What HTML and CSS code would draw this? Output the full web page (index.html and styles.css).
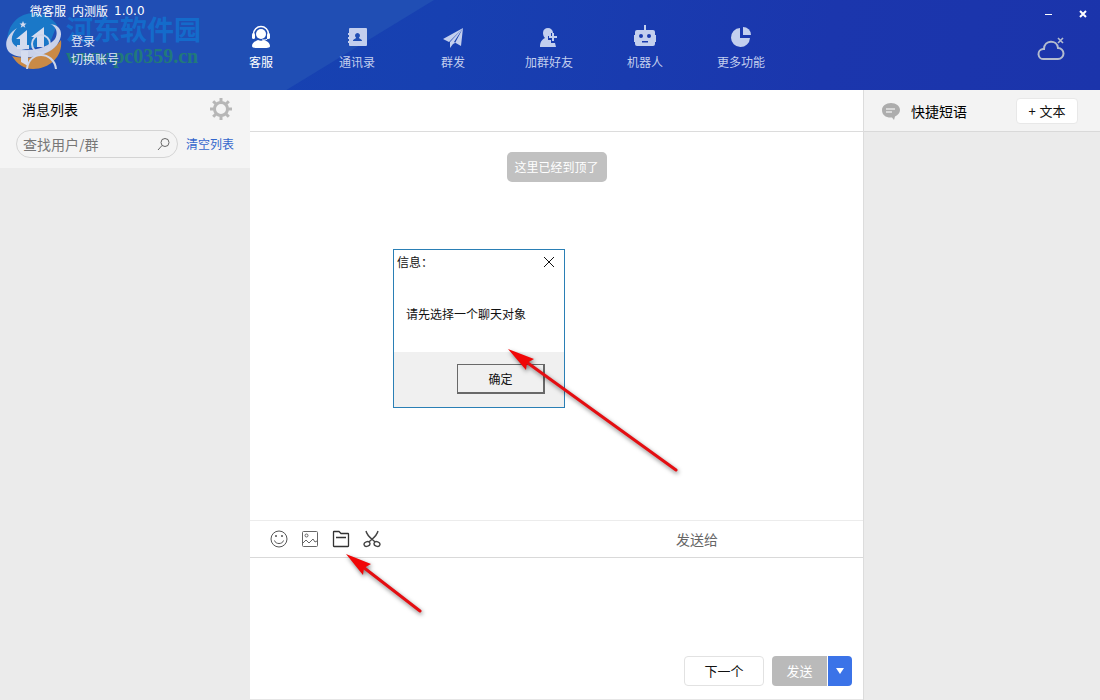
FILE: index.html
```html
<!DOCTYPE html>
<html lang="zh-CN">
<head>
  <meta charset="UTF-8">
  <meta name="viewport" content="width=device-width, initial-scale=1.0">
  <title>微客服</title>
  <link rel="stylesheet" href="styles.css">
</head>
<body>
  <!-- Header -->
  <header class="header">
    <div class="account">
      <div class="watermark">
        <svg width="58" height="58" viewBox="0 0 58 58">
          <path d="M2 32C2 13 14 2 29 2c10 0 18 5 23 12L44 34 10 40z" fill="#1a78c8"/>
          <path d="M7 45C24 50 46 44 56 29c2 17-12 29-28 29-9 0-16-5-21-13z" fill="#c98a46"/>
          <path d="M12 17C6 24 4 32 12 36c12 7 32 0 38-8 4-8 0-13-5-15 12 1 14 11 7 21C42 47 14 50 4 41-2 34 2 23 12 17z" fill="#c9d2ea"/>
          <path d="M11 28l11-9v15h2v4H12v-4h3v-6zM26 26l13-10v20h-7v-10zM16 40h7v15l-7-4z" fill="#d5dcef"/>
          <path d="M18 10l1 2.500h2.500l-2 1.700.8 2.600-2.300-1.500-2.300 1.500.8-2.600-2-1.700H17z" fill="#d5dcef"/>
        </svg>
        <div class="watermark-text">
          <span class="watermark-name">河东软件园</span>
          <span class="watermark-url">www.pc0359.cn</span>
        </div>
      </div>
      <svg class="avatar" width="34" height="38" viewBox="0 0 34 38" fill="none" stroke="#cdd6ec" stroke-width="2">
        <circle cx="15" cy="13" r="9"/>
        <path d="M1 38c1-9 7-14 14-14s14 5 15 14"/>
      </svg>
      <div class="app-title"><span>微客服</span><span>内测版</span><span class="version">1.0.0</span></div>
      <a class="account-link" href="#login">登录</a>
      <a class="account-link" href="#switch">切换账号</a>
    </div>

    <nav class="nav">
      <a class="nav-item active" href="#service">
        <svg width="24" height="24" viewBox="0 0 24 24" fill="currentColor">
          <circle cx="12" cy="9" r="5"/>
          <path d="M4.500 9a7.500 7.500 0 0 1 15 0" fill="none" stroke="currentColor" stroke-width="1.500"/>
          <rect x="3" y="8" width="3" height="6" rx="1.500"/>
          <rect x="18" y="8" width="3" height="6" rx="1.500"/>
          <path d="M19 13c-1 2-3 2-6 2" fill="none" stroke="currentColor"/>
          <path d="M3 21c0-3 3-5 6-6 2 1 4 1 6 0 3 1 6 3 6 6 0 2-3 2-9 2s-9 0-9-2z"/>
        </svg>
        <span>客服</span>
      </a>
      <a class="nav-item" href="#contacts">
        <svg width="24" height="24" viewBox="0 0 24 24" fill="currentColor">
          <path fill-rule="evenodd" d="M5 3h16q1 0 1 1v16q0 1-1 1H5q-1 0-1-1v-2H3v-2h1v-2H3v-2h1v-2H3V8h1V4q0-1 1-1zm7.500 5a2.500 2.500 0 0 0-1.500 4.500c0 1.500-3 1.500-3 3.500h9c0-2-3-2-3-3.500A2.500 2.500 0 0 0 12.500 8z"/>
        </svg>
        <span>通讯录</span>
      </a>
      <a class="nav-item" href="#broadcast">
        <svg width="24" height="24" viewBox="0 0 24 24" fill="currentColor">
          <path d="M2 14L22 3 8 17zM22 3l-2 18-7-4zM22 3L9 17v6l3-4 2-1z"/>
        </svg>
        <span>群发</span>
      </a>
      <a class="nav-item" href="#friends">
        <svg width="24" height="24" viewBox="0 0 24 24" fill="currentColor">
          <path d="M11 3a5 5 0 0 1 5 5h-2v3h-3v4h3v3h4l1 4H3c0-4 1-7 5-9-3-3-3-10 3-10z"/>
          <path d="M15 8h2v3h3v2h-3v3h-2v-3h-3v-2h3z"/>
        </svg>
        <span>加群好友</span>
      </a>
      <a class="nav-item" href="#robot">
        <svg width="24" height="24" viewBox="0 0 24 24" fill="currentColor">
          <path fill-rule="evenodd" d="M11 0h2v5h7q2 0 2 2v3h1v7h-1v2q0 2-2 2H4q-2 0-2-2v-2H1v-7h1V7q0-2 2-2h7zM8 9a2 2 0 1 0 0 4 2 2 0 0 0 0-4zm8 0a2 2 0 1 0 0 4 2 2 0 0 0 0-4zm-7 7v1.500h6V16z"/>
        </svg>
        <span>机器人</span>
      </a>
      <a class="nav-item" href="#more">
        <svg width="24" height="24" viewBox="0 0 24 24" fill="currentColor">
          <path d="M11 3a9.500 9.500 0 1 0 10 10H11z"/>
          <path d="M14 2a8 8 0 0 1 8 8h-8z"/>
        </svg>
        <span>更多功能</span>
      </a>
    </nav>

    <div class="window-tools">
      <div class="window-buttons">
        <button type="button" aria-label="最小化">
          <svg width="8" height="8" viewBox="0 0 8 8" stroke="#fff"><path d="M0 4.500h7"/></svg>
        </button>
        <button type="button" aria-label="关闭">
          <svg width="8" height="8" viewBox="0 0 8 8" stroke="#fff" stroke-width="2"><path d="M1 1l6 6M7 1L1 7"/></svg>
        </button>
      </div>
      <button type="button" class="cloud" aria-label="云端未连接">
        <svg width="28" height="24" viewBox="0 0 28 24" fill="none" stroke="#b4bccf" stroke-width="2">
          <path d="M7 22a5 5 0 0 1-1-10h1c0-9 13-10 14-1a5.500 5.500 0 0 1 0 11z"/>
          <path d="M21 1l5 5M26 1l-5 5" stroke-width="1.600"/>
        </svg>
      </button>
    </div>
  </header>

  <main class="main">
    <!-- Message list -->
    <aside class="sidebar">
      <div class="list-head">
        <div class="list-title">
          <h2>消息列表</h2>
          <button type="button" aria-label="设置">
            <svg width="24" height="24" viewBox="0 0 24 24" fill="none" stroke="#b7b7b7">
              <circle cx="12" cy="12" r="6.500" stroke-width="3"/>
              <path stroke-width="3" d="M12 1v4M12 19v4M1 12h4M19 12h4M4.200 4.200L7 7M17 17l2.800 2.800M4.200 19.800L7 17M17 7l2.800-2.800"/>
            </svg>
          </button>
        </div>
        <div class="search-row">
          <label class="search">
            <input type="text" placeholder="查找用户/群" aria-label="查找用户/群">
            <svg width="14" height="14" viewBox="0 0 14 14" fill="none" stroke="#666"><circle cx="8" cy="5.500" r="4"/><path d="M5 8.500L1 13"/></svg>
          </label>
          <a class="clear-link" href="#clear">清空列表</a>
        </div>
      </div>
    </aside>

    <!-- Chat -->
    <section class="chat">
      <div class="chat-head"></div>
      <div class="messages">
        <div class="top-tip">这里已经到顶了</div>
      </div>
      <div class="toolbar">
        <div class="tools">
          <button type="button" aria-label="表情">
            <svg width="18" height="18" viewBox="0 0 18 18" fill="none" stroke="#555"><circle cx="9" cy="9" r="8"/><path d="M4.500 10.500c1 4 8 4 9 0"/><circle cx="6" cy="6" r=".6" fill="#555"/><circle cx="12" cy="6" r=".6" fill="#555"/></svg>
          </button>
          <button type="button" aria-label="图片">
            <svg width="18" height="18" viewBox="0 0 18 18" fill="none" stroke="#666"><rect x="1.500" y="1.500" width="15" height="15" rx="1"/><circle cx="5.500" cy="5.500" r="1.500"/><path d="M2 13l3-3 3 3 4-4 2 3 2-1"/></svg>
          </button>
          <button type="button" class="file-tool" aria-label="文件">
            <svg width="18" height="18" viewBox="0 0 18 18" fill="none" stroke="#333" stroke-width="1.300"><path d="M1.500 2q0-.5.5-.5h5l2 2h7q.5 0 .5.500v12q0 .5-.5.500H2q-.5 0-.5-.5zM4 7.500h10"/></svg>
            <svg class="arrow-small" width="90" height="72" viewBox="0 0 90 72" aria-hidden="true">
              <path d="M22 17L79 61" stroke="#e40e12" stroke-width="3" stroke-linecap="round"/>
              <path d="M5 4l25 10-7 4-1 7z" fill="#f00606"/>
            </svg>
          </button>
          <button type="button" aria-label="截图">
            <svg width="18" height="18" viewBox="0 0 18 18" fill="none" stroke="#444" stroke-width="1.400"><path d="M3 1c1 5 6 8 9 11M15 1c-1 5-6 8-9 11"/><ellipse cx="4" cy="14" rx="3" ry="2.300" transform="rotate(-20 4 14)"/><ellipse cx="14" cy="14" rx="3" ry="2.300" transform="rotate(20 14 14)"/></svg>
          </button>
        </div>
        <span class="send-to">发送给</span>
      </div>
      <div class="composer">
        <textarea aria-label="消息内容"></textarea>
        <div class="actions">
          <button type="button" class="next-btn">下一个</button>
          <div class="send-group">
            <button type="button" class="send-btn">发送</button>
            <button type="button" class="send-more" aria-label="发送选项">
              <svg width="8" height="6" viewBox="0 0 8 6"><path d="M0 0h8L4 6z" fill="#fff"/></svg>
            </button>
          </div>
        </div>
      </div>
    </section>

    <!-- Quick phrases -->
    <aside class="phrases">
      <div class="phrases-head">
        <svg width="20" height="20" viewBox="0 0 20 20"><path d="M10 2c5 0 9 3 9 7 0 3-2 5-5 6.500L13 19l-2-2.500C5 17 1 14 1 9c0-4 4-7 9-7z" fill="#adadad"/><path d="M5 8h9M5 11h6" stroke="#e6e6e6" stroke-width="1.500"/></svg>
        <h2>快捷短语</h2>
        <button type="button" class="add-btn"><span>+</span><span>文本</span></button>
      </div>
    </aside>
  </main>

  <!-- Message box -->
  <div class="dialog" role="dialog" aria-labelledby="dialogTitle">
    <div class="dialog-head">
      <span id="dialogTitle">信息<span class="colon">：</span></span>
      <button type="button" aria-label="关闭">
        <svg width="12" height="12" viewBox="0 0 12 12" stroke="#111"><path d="M1 1l10 10M11 1L1 11"/></svg>
      </button>
    </div>
    <p class="dialog-text">请先选择一个聊天对象</p>
    <div class="dialog-foot">
      <button type="button" class="ok-btn">确定</button>
    </div>
    <svg class="arrow-large" width="184" height="136" viewBox="0 0 184 136" aria-hidden="true">
      <path d="M21 16L172 125" stroke="#e40e12" stroke-width="3" stroke-linecap="round"/>
      <path d="M4 4l26 10-7 4-1 7z" fill="#f00606"/>
    </svg>
  </div>
</body>
</html>
```

FILE: styles.css
```css
* {
  box-sizing: border-box;
}

body {
  font-family: "Noto Sans CJK SC", sans-serif;
  font-size: 12px;
  line-height: 16px;
  margin: 0;
  min-height: 100vh;
  display: flex;
  flex-direction: column;
  color: #111;
  background: #ebebeb;
}

button {
  font: inherit;
  color: inherit;
  border: none;
  background: none;
  padding: 0;
  cursor: pointer;
}

a {
  text-decoration: none;
}

svg {
  display: block;
}

h2 {
  font-size: 14px;
  font-weight: normal;
  line-height: 20px;
  margin: 0;
  color: #000;
}

/* Header */
.header {
  position: relative;
  display: flex;
  height: 90px;
  color: #fff;
  background: linear-gradient(100deg, #1645b3, #1740b1 40%, #1b36ad 75%, #1b34ab);
}

.header::before {
  content: '';
  position: absolute;
  top: 0;
  left: 0;
  width: 434px;
  height: 100%;
  background: #204eb4;
  clip-path: polygon(0 0, 100% 0, 66% 100%, 0 100%);
}

.account {
  position: relative;
  width: 213px;
  padding: 3px 0 0 30px;
}

.app-title {
  position: relative;
  display: flex;
  gap: 6px;
  margin-bottom: 14px;
}

.version {
  font-family: "DejaVu Sans", sans-serif;
}

.account-link {
  position: relative;
  display: block;
  width: max-content;
  margin: 0 0 2px 41px;
  color: #dde5f6;
}

.avatar {
  position: absolute;
  left: 26px;
  top: 31px;
}

.watermark {
  position: absolute;
  left: 5px;
  top: 11px;
  display: flex;
  gap: 3px;
  pointer-events: none;
}

.watermark-text {
  display: flex;
  flex-direction: column;
  padding-top: 4px;
}

.watermark-name {
  font-size: 27px;
  line-height: 28px;
  font-weight: bold;
  color: #146bcb;
}

.watermark-url {
  font-family: "Liberation Serif", serif;
  font-size: 20px;
  line-height: 26px;
  font-weight: bold;
  color: #21797a;
}

/* Navigation */
.nav {
  position: relative;
  display: flex;
}

.nav-item {
  width: 96px;
  padding-top: 25px;
  display: flex;
  flex-direction: column;
  align-items: center;
  gap: 5px;
  color: #c3cfee;
}

.nav-item.active {
  color: #fff;
}

.window-tools {
  display: flex;
  flex-direction: column;
  align-items: flex-end;
  margin-left: auto;
  padding: 10px 13px 0 0;
}

.window-buttons {
  display: flex;
  gap: 26px;
}

.cloud {
  margin: 19px 22px 0 0;
}

/* Columns */
.main {
  flex: 1;
  display: grid;
  grid-template-columns: 250px 1fr 237px;
}

.list-head {
  height: 78px;
  padding: 7px 16px 0;
  background: #f4f4f4;
}

.list-title {
  display: flex;
  justify-content: space-between;
  align-items: center;
  padding: 0 1px 0 6px;
}

.search-row {
  display: flex;
  align-items: center;
  gap: 8px;
  margin-top: 9px;
}

.search {
  width: 162px;
  height: 28px;
  padding: 0 6px;
  display: flex;
  align-items: center;
  border: 1px solid #d4d4d4;
  border-radius: 14px;
}

.search input {
  flex: 1;
  min-width: 0;
  padding: 0;
  border: none;
  outline: none;
  background: none;
  font: inherit;
  font-size: 14px;
}

.search input::placeholder {
  color: #777;
}

.clear-link {
  color: #3366cc;
  white-space: nowrap;
}

/* Chat */
.chat {
  display: flex;
  flex-direction: column;
  background: #fff;
}

.chat-head {
  height: 42px;
  border-bottom: 1px solid #dcdcdc;
}

.messages {
  flex: 1;
  padding-top: 20px;
}

.top-tip {
  width: 100px;
  margin: 0 auto;
  line-height: 30px;
  text-align: center;
  color: #fff;
  background: #c1c1c1;
  border-radius: 5px;
}

.toolbar {
  height: 38px;
  padding: 0 145px 0 20px;
  display: flex;
  align-items: center;
  justify-content: space-between;
  border-top: 1px solid #ececec;
  border-bottom: 1px solid #d9d9d9;
}

.tools {
  display: flex;
  gap: 13px;
}

.file-tool {
  position: relative;
}

.send-to {
  font-size: 14px;
  color: #666;
}

.composer {
  height: 142px;
  padding: 8px 11px 13px 20px;
  display: flex;
  flex-direction: column;
  border-bottom: 1px solid #e6e6e6;
}

.composer textarea {
  flex: 1;
  border: none;
  outline: none;
  resize: none;
  font: inherit;
}

.actions {
  display: flex;
  justify-content: flex-end;
  gap: 8px;
}

.next-btn {
  width: 80px;
  height: 30px;
  font-size: 13px;
  background: #fff;
  border: 1px solid #e2e2e2;
  border-radius: 4px;
}

.send-group {
  display: flex;
  gap: 1px;
}

.send-btn {
  width: 55px;
  height: 30px;
  font-size: 13px;
  color: #fff;
  background: #bababa;
  border-radius: 4px 0 0 4px;
}

.send-more {
  width: 24px;
  height: 30px;
  display: flex;
  align-items: center;
  justify-content: center;
  background: #3b73e8;
  border-radius: 0 4px 4px 0;
}

/* Quick phrases */
.phrases {
  border-left: 1px solid #dcdcdc;
}

.phrases-head {
  height: 42px;
  padding: 0 22px 0 17px;
  display: flex;
  align-items: center;
  gap: 10px;
  background: #f3f3f3;
  border-bottom: 1px solid #d9d9d9;
}

.add-btn {
  width: 62px;
  height: 26px;
  margin-left: auto;
  display: flex;
  align-items: center;
  justify-content: center;
  gap: 4px;
  font-size: 13px;
  background: #fff;
  border: 1px solid #e8e8e8;
  border-radius: 4px;
}

/* Message box */
.dialog {
  position: absolute;
  left: 393px;
  top: 249px;
  width: 172px;
  border: 1px solid #2a7fb5;
  background: #fff;
}

.dialog-head {
  display: flex;
  justify-content: space-between;
  align-items: center;
  height: 24px;
  padding: 0 9px 0 3px;
}

.colon {
  font-family: "Noto Sans CJK TC", sans-serif;
}

.dialog-text {
  margin: 0;
  padding: 32px 12px 30px;
}

.dialog-foot {
  display: flex;
  justify-content: flex-end;
  padding: 12px 19px 13px;
  background: #f0f0f0;
}

.ok-btn {
  width: 88px;
  height: 30px;
  border: 1px solid #696969;
  border-width: 1px 2px 2px 1px;
}

/* Pointer arrows */
.arrow-small,
.arrow-large {
  position: absolute;
  pointer-events: none;
  filter: drop-shadow(1px 2px 2px rgba(0, 0, 0, 0.5));
}

.arrow-small {
  left: 9px;
  top: 20px;
}

.arrow-large {
  left: 110px;
  top: 95px;
}
```
